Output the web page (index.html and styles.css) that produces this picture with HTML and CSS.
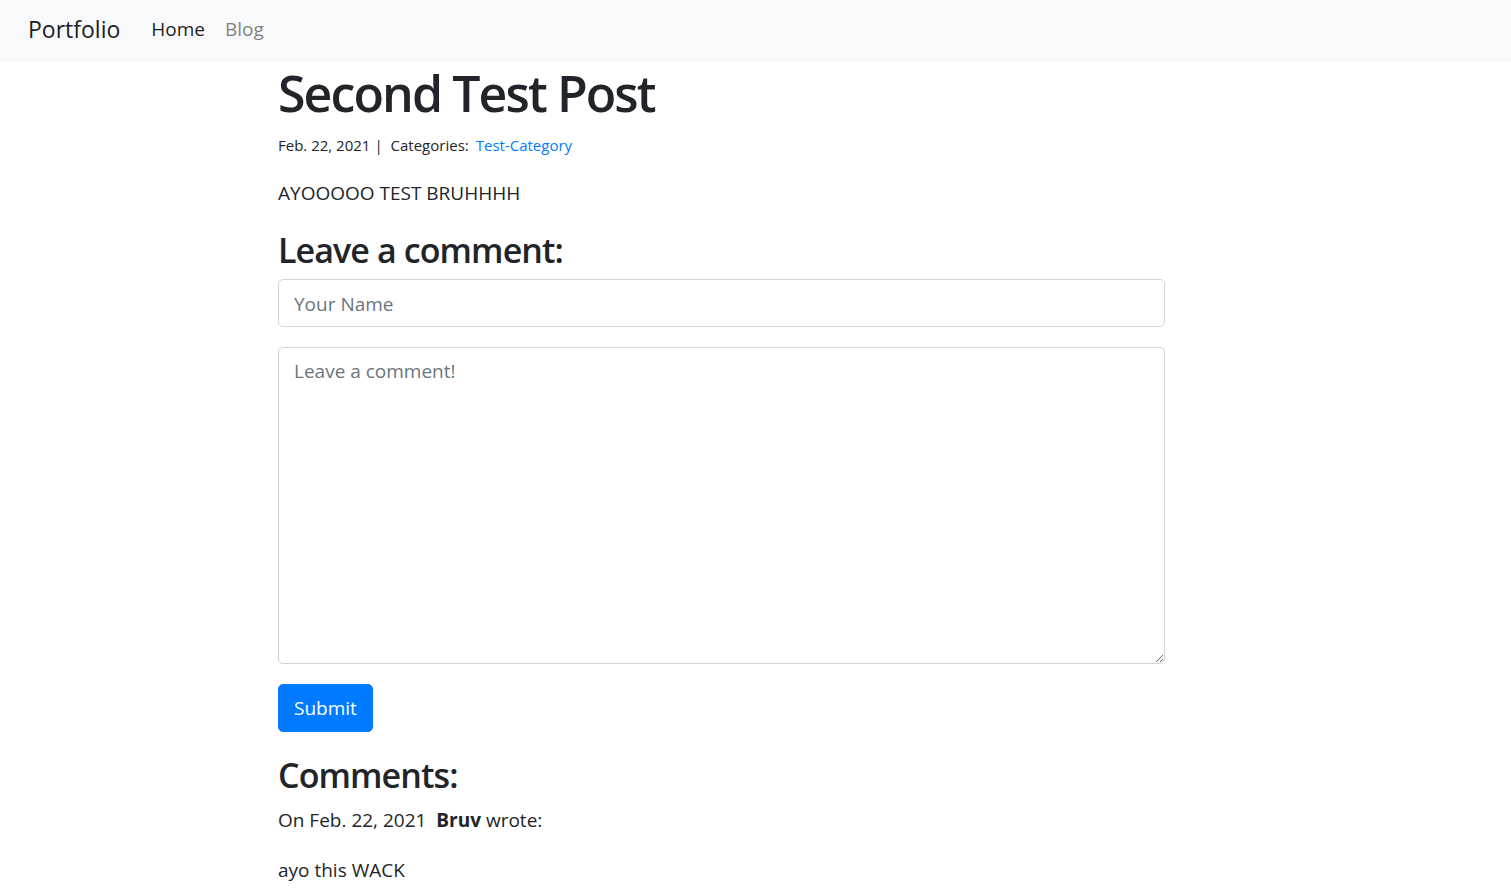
FILE: index.html
```html
<!DOCTYPE html>
<html lang="en">
<head>
<meta charset="utf-8">
<title>Second Test Post</title>
<link rel="stylesheet" href="styles.css">
</head>
<body>
<nav class="navbar">
  <a class="brand" href="#">Portfolio</a>
  <ul class="nav">
    <li><a class="nav-link active" href="#">Home</a></li>
    <li><a class="nav-link" href="#">Blog</a></li>
  </ul>
</nav>
<main class="content">
  <h1 class="post-title">Second Test Post</h1>
  <div class="meta">Feb. 22, 2021<span class="sep">|</span> Categories:<a class="cat" href="#">Test-Category</a></div>
  <p class="body-text">AYOOOOO TEST BRUHHHH</p>
  <h3 class="section-title">Leave a comment:</h3>
  <form class="comment-form">
    <input class="field" type="text" placeholder="Your Name">
    <textarea class="field area" rows="10" placeholder="Leave a comment!"></textarea>
    <button class="btn" type="button">Submit</button>
  </form>
  <h3 class="section-title comments-title">Comments:</h3>
  <p class="comment-meta">On Feb. 22, 2021&nbsp; <b>Bruv</b> wrote:</p>
  <p class="comment-body">ayo this WACK</p>
</main>
</body>
</html>
```

FILE: styles.css
```css
* { box-sizing: border-box; }
html, body { margin: 0; padding: 0; }
body {
  font-family: "Open Sans", "Noto Sans", sans-serif;
  color: #212529;
  background: #fff;
  font-size: 19px;
  line-height: 30px;
}
a { text-decoration: none; }

.navbar {
  height: 62px;
  background: #f8f9fa;
  display: flex;
  align-items: center;
  padding: 0 28px 4px;
}
.brand {
  font-size: 23px;
  color: rgba(0,0,0,.9);
  margin-right: 21px;
}
.nav {
  list-style: none;
  margin: 0;
  padding: 0;
  display: flex;
}
.nav-link {
  display: block;
  padding: 0 10px;
  font-size: 19px;
  color: rgba(0,0,0,.5);
}
.nav-link.active { color: rgba(0,0,0,.9); }

.content {
  margin-left: 278px;
  width: 887px;
}
.post-title {
  font-size: 50px;
  line-height: 60px;
  font-weight: 600;
  letter-spacing: -1.9px;
  margin: 1px 0 10px;
}
.meta {
  font-size: 15px;
  line-height: 24px;
  margin-bottom: 21px;
}
.sep { margin: 0 4px 0 4px; }
.cat { color: #007bff; margin-left: 7px; }
.body-text { margin: 0 0 19px; }
.section-title {
  font-size: 34px;
  line-height: 42px;
  font-weight: 600;
  letter-spacing: -0.9px;
  padding-top: 2px;
  margin: 0 0 8px;
}
.comment-form { display: flex; flex-direction: column; align-items: flex-start; }
.field {
  display: block;
  width: 100%;
  height: 48px;
  padding: 8px 15px 6px;
  font: inherit;
  color: #495057;
  border: 1px solid #ced4da;
  border-radius: 5px;
  margin: 0 0 20px;
  background: #fff;
}
.field::placeholder { color: #6c757d; }
.area { height: 317px; resize: vertical; }
.btn {
  font: inherit;
  height: 48px;
  padding: 0 15px;
  color: #fff;
  background: #007bff;
  border: 1px solid #007bff;
  border-radius: 5px;
  margin-bottom: 20px;
}
.comments-title { margin-bottom: 9px; }
.comment-meta { margin: 0 0 20px; }
.comment-body { margin: 0; }
```
